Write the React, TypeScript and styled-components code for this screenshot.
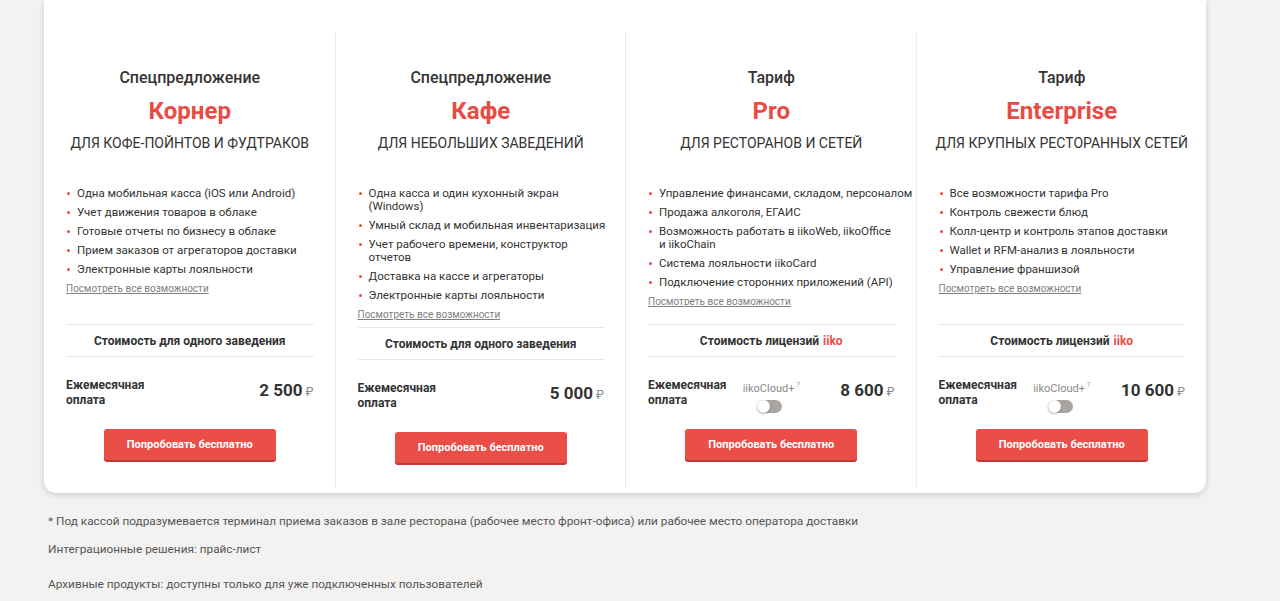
import React from "react";
import styled, { createGlobalStyle } from "styled-components";

const GlobalStyle = createGlobalStyle`
  body {
    margin: 0;
    background: #f3f2f1;
    font-family: Roboto, "Liberation Sans", Arial, sans-serif;
    color: #333;
  }
`;

const Page = styled.div`
  padding: 0 74px 0 44px;
`;

const Panel = styled.div`
  background: #fff;
  border-radius: 0 0 12px 12px;
  box-shadow: 0 2px 6px rgba(0, 0, 0, 0.16);
  padding: 32px 0 5px;
`;

const Grid = styled.div`
  display: grid;
  grid-template-columns: repeat(4, minmax(0, 1fr));
`;

const Column = styled.div<{ $first?: boolean }>`
  display: flex;
  flex-direction: column;
  align-items: stretch;
  padding: 36px 21px 25px 22px;
  border-left: ${(p) => (p.$first ? "none" : "1px solid #ececec")};
  text-align: center;
`;

const Kind = styled.div`
  font-size: 16px;
  line-height: 20px;
  font-weight: 500;
  color: #333;
`;

const Name = styled.div`
  margin-top: 8px;
  font-size: 24px;
  line-height: 30px;
  font-weight: 700;
  color: #e84c44;
`;

const Audience = styled.div`
  margin: 8px -12px 0;
  font-size: 14px;
  line-height: 18px;
  text-transform: uppercase;
  color: #333;
  white-space: nowrap;
`;

const Features = styled.div`
  margin-top: 35px;
  min-height: 131px;
  text-align: left;
  margin-right: -16px;
`;

const List = styled.ul`
  list-style: none;
  margin: 0;
  padding: 0;
`;

const Item = styled.li`
  position: relative;
  padding-left: 11px;
  margin-bottom: 6px;
  font-size: 11.5px;
  line-height: 13px;
  color: #333;
  white-space: nowrap;

  &::before {
    content: "";
    position: absolute;
    left: 1px;
    top: 5px;
    width: 3px;
    height: 3px;
    border-radius: 50%;
    background: #e84c44;
  }
`;

const More = styled.a`
  display: block;
  font-size: 10px;
  line-height: 13px;
  color: #808080;
  text-decoration: underline;
`;

const CostHead = styled.div`
  margin-top: 6px;
  border-top: 1px solid #e6e6e6;
  border-bottom: 1px solid #e6e6e6;
  height: 31px;
  display: flex;
  align-items: center;
  justify-content: center;
  font-size: 12px;
  font-weight: 700;
  color: #333;
`;

const Accent = styled.span`
  color: #e84c44;
  margin-left: 4px;
`;

const PriceRow = styled.div<{ $cloud?: boolean }>`
  margin-top: 21px;
  height: 30px;
  display: grid;
  grid-template-columns: ${(p) => (p.$cloud ? "1fr auto 1fr" : "1fr auto")};
  align-items: start;
  text-align: left;
`;

const Monthly = styled.div`
  font-size: 12px;
  line-height: 15px;
  font-weight: 700;
  color: #333;
`;

const Cloud = styled.div`
  display: flex;
  flex-direction: column;
  align-items: center;
`;

const CloudLabel = styled.span`
  font-size: 11px;
  line-height: 14px;
  color: #8a8a8a;

  sup {
    font-size: 7px;
    margin-left: 2px;
    vertical-align: 5px;
    color: #9a9a9a;
  }
`;

const Toggle = styled.span`
  margin-top: 4px;
  margin-right: 3px;
  position: relative;
  width: 25px;
  height: 13px;
  border-radius: 7px;
  background: #a9a5a2;

  &::after {
    content: "";
    position: absolute;
    left: 0;
    top: 0;
    width: 13px;
    height: 13px;
    border-radius: 50%;
    background: #fff;
    box-shadow: 0 1px 2px rgba(0, 0, 0, 0.3);
  }
`;

const Price = styled.div`
  justify-self: end;
  display: flex;
  align-items: baseline;
  gap: 3px;
  font-size: 17px;
  line-height: 24px;
  font-weight: 700;
  color: #333;
  white-space: nowrap;

  small {
    font-size: 12px;
    font-weight: 400;
    color: #8a8a8a;
  }
`;

const TryButton = styled.button`
  align-self: center;
  margin-top: 21px;
  width: 172px;
  height: 31px;
  border: none;
  border-radius: 3px;
  background: #e94e47;
  box-shadow: 0 2px 0 #bf3a34;
  color: #fff;
  font-family: inherit;
  font-size: 11px;
  font-weight: 700;
  cursor: pointer;
`;

const Notes = styled.div`
  padding: 20px 0 0 4px;
  font-size: 11.8px;
  line-height: 16px;
  color: #555;
`;

const Note = styled.p<{ $gap: number }>`
  margin: ${(p) => p.$gap}px 0 0;
`;

type Plan = {
  kind: string;
  name: string;
  audience: string;
  items: React.ReactNode[];
  costTitle: React.ReactNode;
  price: string;
  cloud?: boolean;
};

const plans: Plan[] = [
  {
    kind: "Спецпредложение",
    name: "Корнер",
    audience: "для кофе-пойнтов и фудтраков",
    items: [
      "Одна мобильная касса (iOS или Android)",
      "Учет движения товаров в облаке",
      "Готовые отчеты по бизнесу в облаке",
      "Прием заказов от агрегаторов доставки",
      "Электронные карты лояльности",
    ],
    costTitle: "Стоимость для одного заведения",
    price: "2 500",
  },
  {
    kind: "Спецпредложение",
    name: "Кафе",
    audience: "для небольших заведений",
    items: [
      <>Одна касса и один кухонный экран<br />(Windows)</>,
      "Умный склад и мобильная инвентаризация",
      <>Учет рабочего времени, конструктор<br />отчетов</>,
      "Доставка на кассе и агрегаторы",
      "Электронные карты лояльности",
    ],
    costTitle: "Стоимость для одного заведения",
    price: "5 000",
  },
  {
    kind: "Тариф",
    name: "Pro",
    audience: "для ресторанов и сетей",
    items: [
      "Управление финансами, складом, персоналом",
      "Продажа алкоголя, ЕГАИС",
      <>Возможность работать в iikoWeb, iikoOffice<br />и iikoChain</>,
      "Система лояльности iikoCard",
      "Подключение сторонних приложений (API)",
    ],
    costTitle: (
      <>
        Стоимость лицензий<Accent>iiko</Accent>
      </>
    ),
    price: "8 600",
    cloud: true,
  },
  {
    kind: "Тариф",
    name: "Enterprise",
    audience: "для крупных ресторанных сетей",
    items: [
      "Все возможности тарифа Pro",
      "Контроль свежести блюд",
      "Колл-центр и контроль этапов доставки",
      "Wallet и RFM-анализ в лояльности",
      "Управление франшизой",
    ],
    costTitle: (
      <>
        Стоимость лицензий<Accent>iiko</Accent>
      </>
    ),
    price: "10 600",
    cloud: true,
  },
];

export default function App() {
  return (
    <Page>
      <GlobalStyle />
      <Panel>
        <Grid>
          {plans.map((plan, i) => (
            <Column key={plan.name} $first={i === 0}>
              <Kind>{plan.kind}</Kind>
              <Name>{plan.name}</Name>
              <Audience>{plan.audience}</Audience>
              <Features>
                <List>
                  {plan.items.map((item, j) => (
                    <Item key={j}>{item}</Item>
                  ))}
                </List>
                <More href="#">Посмотреть все возможности</More>
              </Features>
              <CostHead>{plan.costTitle}</CostHead>
              <PriceRow $cloud={plan.cloud}>
                <Monthly>
                  Ежемесячная
                  <br />
                  оплата
                </Monthly>
                {plan.cloud && (
                  <Cloud>
                    <CloudLabel>
                      iikoCloud+<sup>?</sup>
                    </CloudLabel>
                    <Toggle />
                  </Cloud>
                )}
                <Price>
                  {plan.price}
                  <small>₽</small>
                </Price>
              </PriceRow>
              <TryButton>Попробовать бесплатно</TryButton>
            </Column>
          ))}
        </Grid>
      </Panel>
      <Notes>
        <Note $gap={0}>
          * Под кассой подразумевается терминал приема заказов в зале ресторана (рабочее место
          фронт-офиса) или рабочее место оператора доставки
        </Note>
        <Note $gap={12}>Интеграционные решения: прайс-лист</Note>
        <Note $gap={19}>Архивные продукты: доступны только для уже подключенных пользователей</Note>
      </Notes>
    </Page>
  );
}
